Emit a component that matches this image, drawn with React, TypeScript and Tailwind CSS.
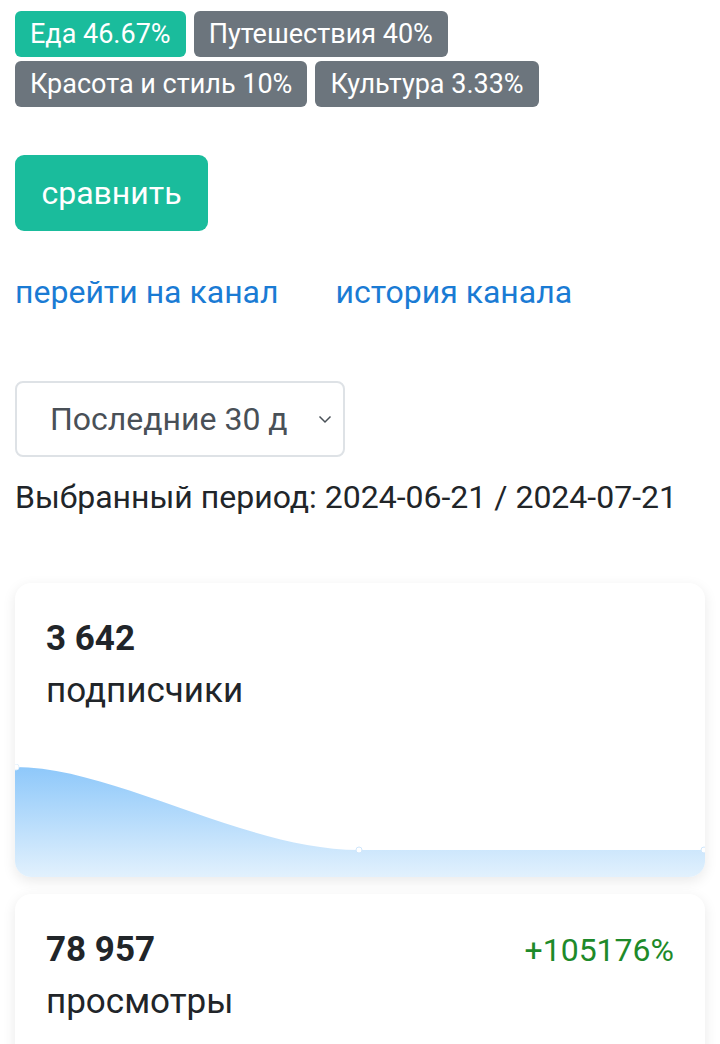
import React from "react";

const badges = [
  [{ t: "Еда 46.67%", c: "bg-[#1abc9c]" }, { t: "Путешествия 40%", c: "bg-[#6c757d]" }],
  [{ t: "Красота и стиль 10%", c: "bg-[#6c757d]" }, { t: "Культура 3.33%", c: "bg-[#6c757d]" }],
];

function Chart() {
  const w = 690;
  const h = 113;
  const line = `M0 3 C 100 3, 230 86, 344 86 L ${w} 86`;
  return (
    <svg width={w} height={h} viewBox={`0 0 ${w} ${h}`} className="block">
      <defs>
        <linearGradient id="g" x1="0" y1="0" x2="0" y2="1">
          <stop offset="0" stopColor="#8ec8fa" />
          <stop offset="1" stopColor="#e2f1fd" />
        </linearGradient>
      </defs>
      <path d={`${line} L ${w} ${h} L 0 ${h} Z`} fill="url(#g)" />
      <circle cx="1" cy="3" r="3" fill="#fff" stroke="#e3f0fb" strokeWidth="1" />
      <circle cx="344" cy="86" r="3" fill="#fff" stroke="#cfe6fb" strokeWidth="1" />
      <circle cx="689" cy="86" r="3" fill="#fff" stroke="#cfe6fb" strokeWidth="1" />
    </svg>
  );
}

export default function App() {
  return (
    <div className="w-[720px] h-[1044px] overflow-hidden bg-white font-['Roboto',sans-serif] text-[#212529]">
      <div className="px-[15px] pt-[11px]">
        <div className="flex flex-col gap-[4px]">
          {badges.map((row, i) => (
            <div key={i} className="flex gap-[8px]">
              {row.map((b) => (
                <span
                  key={b.t}
                  className={`${b.c} text-white rounded-[6px] h-[46px] px-[15px] flex items-center text-[27px] leading-none`}
                >
                  {b.t}
                </span>
              ))}
            </div>
          ))}
        </div>

        <button className="mt-[48px] h-[76px] w-[193px] rounded-[9px] bg-[#1abc9c] text-white text-[32px] flex items-center justify-center">
          сравнить
        </button>

        <div className="mt-[40px] flex gap-[57px] text-[32px] leading-[42px] text-[#1a7bd4]">
          <span>перейти на канал</span>
          <span>история канала</span>
        </div>

        <div className="mt-[68px] w-[330px] h-[76px] rounded-[8px] border-2 border-[#dee2e6] flex items-center justify-between pl-[33px] pr-[11px] text-[32px] text-[#495057]">
          <span>Последние 30 д</span>
          <svg width="14" height="9" viewBox="0 0 14 9" fill="none" stroke="#495057" strokeWidth="1.5">
            <path d="M1.5 1.5 L7 7 L12.5 1.5" />
          </svg>
        </div>

        <div className="mt-[19px] text-[32px] leading-[42px]">
          Выбранный период: 2024-06-21 / 2024-07-21
        </div>

        <div className="mt-[65px] w-[690px] rounded-[16px] bg-white shadow-[0_4px_14px_rgba(0,0,0,0.09)] overflow-hidden">
          <div className="pl-[31px] pr-[31px] pt-[35px] h-[181px]">
            <div className="text-[35px] font-bold leading-[42px]">3 642</div>
            <div className="mt-[10px] text-[35px] leading-[42px]">подписчики</div>
          </div>
          <Chart />
        </div>

        <div className="mt-[17px] w-[690px] h-[300px] rounded-[16px] bg-white shadow-[0_4px_14px_rgba(0,0,0,0.09)]">
          <div className="pl-[31px] pr-[31px] pt-[35px]">
            <div className="flex justify-between items-baseline">
              <div className="text-[35px] font-bold leading-[42px]">78 957</div>
              <div className="text-[32px] text-[#1e8a2a] leading-[42px]">+105176%</div>
            </div>
            <div className="mt-[10px] text-[35px] leading-[42px]">просмотры</div>
          </div>
        </div>
      </div>
    </div>
  );
}
